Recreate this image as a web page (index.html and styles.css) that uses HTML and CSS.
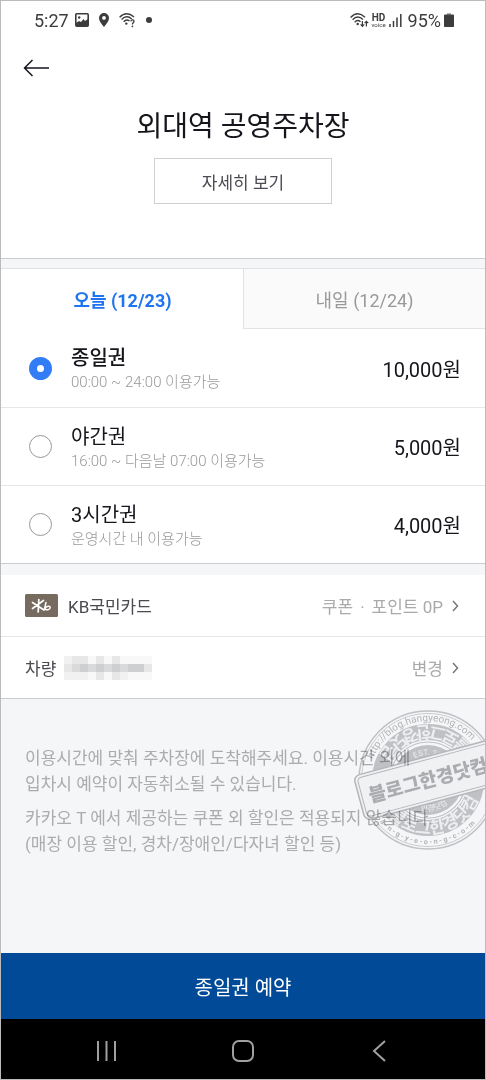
FILE: index.html
```html
<!DOCTYPE html>
<html lang="ko">
<head>
    <meta charset="UTF-8">
    <meta name="viewport" content="width=device-width, initial-scale=1.0">
    <title>외대역 공영주차장</title>
    <link rel="stylesheet" href="styles.css">
</head>
<body>
    <div class="screen">
        <div class="status-bar">
            <div class="status-left">
                <span class="status-time">5:27</span>
                <svg width="14" height="14" viewBox="0 0 14 14">
                    <rect x="0.8" y="0.8" width="12.4" height="12.4" rx="1" fill="none" stroke="#3c3c3c" stroke-width="1.6"/>
                    <path d="M1 10l3-2 2 1 2.500-3L10 8l3-2v7H1z" fill="#3c3c3c"/>
                    <circle cx="4.200" cy="4.500" r="1.200" fill="#3c3c3c"/>
                </svg>
                <svg class="icon-pin" width="10" height="14" viewBox="0 0 10 14">
                    <path fill-rule="evenodd" d="M5 0a5 5 0 0 0-5 5c0 3.500 5 9 5 9s5-5.500 5-9a5 5 0 0 0-5-5zm0 3a1.900 1.900 0 1 1 0 3.800A1.900 1.900 0 0 1 5 3z" fill="#3c3c3c"/>
                </svg>
                <svg class="icon-wifi" width="17" height="15" viewBox="0 0 17 15">
                    <g fill="none" stroke="#3c3c3c" stroke-width="1.300">
                        <path d="M0.600 4.200Q7.500-2.600 15 4"/>
                        <path d="M2.600 6.500Q7.500 1.300 12.800 6"/>
                        <path d="M4.600 8.700Q7.500 5.600 10.500 8"/>
                        <path d="M11.800 8.400q0.300-1.600 1.700-1.600 1.500 0 1.500 1.500 0 1-0.900 1.600-0.700 0.500-0.700 1.600"/>
                    </g>
                    <circle cx="7.300" cy="10.600" r="1.200" fill="#3c3c3c"/>
                    <circle cx="13.400" cy="13.300" r="0.900" fill="#3c3c3c"/>
                </svg>
                <span class="status-dot"></span>
            </div>
            <div class="status-right">
                <svg width="19" height="15" viewBox="0 0 19 15">
                    <g fill="none" stroke="#3c3c3c" stroke-width="1.400">
                        <path d="M0.600 4.400Q7.500-2.600 15 4.200"/>
                        <path d="M2.600 6.800Q7.500 1.500 13 6.500"/>
                        <path d="M4.700 9.200Q7.500 6.200 10.500 8.800"/>
                        <path d="M12.400 8v5.200M10.600 11.400l1.800 1.900 1.800-1.900M16.400 13.500V8.200M14.600 10.200l1.800-1.900 1.800 1.900" stroke-width="1.200"/>
                    </g>
                    <circle cx="7.700" cy="11" r="1.200" fill="#3c3c3c"/>
                </svg>
                <span class="hd-voice"><b>HD</b><span>voice</span></span>
                <svg width="13" height="14" viewBox="0 0 13 14">
                    <path d="M1 11v3M4.500 8v6M8 4.500V14M11.800 1v13" stroke="#3c3c3c" stroke-width="1.500"/>
                </svg>
                <span class="status-battery">95%</span>
                <svg width="10" height="14" viewBox="0 0 10 14">
                    <path d="M3 0h4v2H3z" fill="#aaa"/>
                    <rect y="1.500" width="10" height="12.500" rx="0.800" fill="#3c3c3c"/>
                </svg>
            </div>
        </div>

        <div class="header">
            <button type="button" class="btn-back" aria-label="뒤로">
                <svg width="26" height="18" viewBox="0 0 26 18">
                    <path d="M26 9H1.500M9.500 1L1.500 9l8 8" fill="none" stroke="#15151c" stroke-width="1.500"/>
                </svg>
            </button>
            <h1>외대역 공영주차장</h1>
            <button type="button" class="btn-detail">자세히 보기</button>
        </div>

        <div class="tabs">
            <button type="button" class="tab active">오늘 (12/23)</button>
            <button type="button" class="tab">내일 (12/24)</button>
        </div>

        <form class="ticket-list">
            <label class="ticket">
                <input type="radio" name="ticket" value="day" checked>
                <span class="ticket-info">
                    <span class="ticket-name selected">종일권</span>
                    <span class="ticket-time">00:00 ~ 24:00 이용가능</span>
                </span>
                <span class="ticket-price">10,000원</span>
            </label>
            <label class="ticket">
                <input type="radio" name="ticket" value="night">
                <span class="ticket-info">
                    <span class="ticket-name">야간권</span>
                    <span class="ticket-time">16:00 ~ 다음날 07:00 이용가능</span>
                </span>
                <span class="ticket-price">5,000원</span>
            </label>
            <label class="ticket">
                <input type="radio" name="ticket" value="3h">
                <span class="ticket-info">
                    <span class="ticket-name">3시간권</span>
                    <span class="ticket-time">운영시간 내 이용가능</span>
                </span>
                <span class="ticket-price">4,000원</span>
            </label>
        </form>

        <div class="options">
            <a href="#" class="option">
                <svg class="card-logo" width="33" height="23" viewBox="0 0 33 23">
                    <rect width="33" height="23" rx="1.500" fill="#776a5f"/>
                    <g fill="none" stroke="#fff" stroke-width="1.700" stroke-linecap="round">
                        <path d="M13.800 5.500L13.200 18M7.500 8.500L19 16M18.500 6.500L7.500 14.500"/>
                        <path d="M21 8.500l-1.400 6.200c1.500 2 5.600 1 5.600-1.200 0-2-3.600-1.600-5 0.600" stroke-width="1.500"/>
                    </g>
                </svg>
                <span class="option-name">KB국민카드</span>
                <span class="option-value"><span>쿠폰</span><span class="dot">·</span><span>포인트 0P</span></span>
                <svg class="chevron" width="7" height="12" viewBox="0 0 7 12">
                    <path d="M1 1l4.500 5L1 11" fill="none" stroke="#777" stroke-width="1.500"/>
                </svg>
            </a>
            <a href="#" class="option">
                <span class="option-name">차량</span>
                <!-- 차량번호 모자이크 -->
                <svg class="plate" width="88" height="24" viewBox="0 0 88 24" shape-rendering="crispEdges">
                    <rect width="88" height="24" fill="#f1f1f1"/>
                    <path d="M24 0h8v24h-8zM40 0h8v8h-8zM56 0h32v8H56zM40 16h8v8h-8zM64 16h24v8H64z" fill="#f8f8f8"/>
                    <path d="M8 0h16v8H8zM32 0h8v24h-8zM48 0h8v24h-8zM0 8h8v8H0zM80 8h8v8h-8z" fill="#e7e7e7"/>
                    <path d="M8 8h8v8H8zM24 8h8v8h-8zM40 8h8v8h-8zM56 8h8v8h-8z" fill="#dadada"/>
                    <path d="M16 8h8v8h-8zM32 8h8v8h-8zM48 8h8v8h-8zM64 8h16v8H64z" fill="#cdcfd0"/>
                </svg>
                <span class="option-value">변경</span>
                <svg class="chevron" width="7" height="12" viewBox="0 0 7 12">
                    <path d="M1 1l4.500 5L1 11" fill="none" stroke="#777" stroke-width="1.500"/>
                </svg>
            </a>
        </div>

        <div class="notice">
            <p>이용시간에 맞춰 주차장에 도착해주세요. 이용시간 외에<br>입차시 예약이 자동취소될 수 있습니다.</p>
            <p>카카오 T 에서 제공하는 쿠폰 외 할인은 적용되지 않습니다.<br>(매장 이용 할인, 경차/장애인/다자녀 할인 등)</p>

            <svg class="stamp" width="150" height="150" viewBox="-75 -75 150 150">
                <defs>
                    <path id="ringUrl" d="M-59 0A59 59 0 0 1 59 0"/>
                    <path id="ringDash" d="M-64 0A64 64 0 0 0 64 0"/>
                    <path id="ringTop" d="M54 0A54 54 0 0 0 -54 0"/>
                    <path id="ringBottom" d="M-54 0A54 54 0 0 0 54 0"/>
                    <path id="ringEst" d="M-25 0A25 25 0 0 1 25 0"/>
                    <path id="ringSmall" d="M-31 0A31 31 0 0 0 31 0"/>
                </defs>
                <g fill="none" stroke="#c8c8ca">
                    <circle r="69" stroke-width="1.500"/>
                    <circle r="66.500" stroke-width="0.800"/>
                    <circle r="48" stroke-width="16"/>
                    <circle r="38" stroke-width="1.200"/>
                </g>
                <circle r="35" fill="#c8c8ca"/>
                <g class="stamp-text" text-anchor="middle">
                    <text class="stamp-url"><textPath href="#ringUrl" startOffset="44%">http://blog.hangyeong.com</textPath></text>
                    <text class="stamp-dash"><textPath href="#ringDash" startOffset="47%">h - a - n - g - y - e - o - n - g - c - o - m</textPath></text>
                    <text class="stamp-ring"><textPath href="#ringTop" startOffset="53%">블로그한경닷컴</textPath></text>
                    <text class="stamp-ring"><textPath href="#ringBottom" startOffset="56%">블로그한경닷컴</textPath></text>
                    <text class="stamp-est"><textPath href="#ringEst" startOffset="55%">EST. 2009</textPath></text>
                    <text class="stamp-est"><textPath href="#ringSmall" startOffset="57%">한경닷컴</textPath></text>
                </g>
                <g transform="rotate(-15)">
                    <rect x="-71" y="-23" width="142" height="46" rx="6" fill="#fafafa" stroke="#bdbdbf" stroke-width="1.500"/>
                    <rect x="-68" y="-20" width="136" height="40" rx="4" fill="#fafafa" stroke="#bdbdbf"/>
                    <text class="stamp-title" y="7" text-anchor="middle">블로그한경닷컴</text>
                </g>
            </svg>
        </div>

        <button type="button" class="btn-reserve">종일권 예약</button>

        <div class="nav-bar">
            <button type="button" aria-label="최근 앱">
                <svg width="22" height="22" viewBox="0 0 22 22">
                    <path d="M2 1v20M10.500 1v20M19 1v20" stroke="#a0a0a0" stroke-width="2"/>
                </svg>
            </button>
            <button type="button" aria-label="홈">
                <svg width="24" height="24" viewBox="0 0 24 24">
                    <rect x="2" y="2" width="20" height="20" rx="6" fill="none" stroke="#a0a0a0" stroke-width="2"/>
                </svg>
            </button>
            <button type="button" aria-label="이전">
                <svg width="22" height="22" viewBox="0 0 22 22">
                    <path d="M17 1L6 11l11 10" fill="none" stroke="#a0a0a0" stroke-width="2"/>
                </svg>
            </button>
        </div>
    </div>
</body>
</html>
```
FILE: styles.css
```css
* {
    margin: 0;
    padding: 0;
    box-sizing: border-box;
}
body {
    font-family: Roboto, "Noto Sans CJK KR", sans-serif;
    font-weight: 300;
    color: #15151c;
    background: #fff;
}
button {
    font: inherit;
    color: inherit;
    border: none;
    background: none;
    cursor: pointer;
}
a {
    color: inherit;
    text-decoration: none;
}
svg {
    display: block;
    flex-shrink: 0;
}
.screen {
    display: flex;
    flex-direction: column;
    min-height: 100vh;
    border: 1px solid #bbb;
    background: #f4f6f8;
}

/* 상태바 */
.status-bar {
    display: flex;
    justify-content: space-between;
    align-items: center;
    height: 38px;
    padding: 0 31px 0 33px;
    background: #fff;
    color: #3c3c3c;
    font-size: 18px;
    font-weight: 400;
}
.status-left {
    display: flex;
    align-items: center;
}
.status-time {
    margin-right: 6px;
}
.icon-pin {
    margin-left: 10px;
}
.icon-wifi {
    margin-left: 10px;
}
.status-dot {
    width: 6px;
    height: 6px;
    margin-left: 10px;
    border-radius: 50%;
    background: #3c3c3c;
}
.status-right {
    display: flex;
    align-items: center;
    gap: 3px;
}
.hd-voice {
    display: flex;
    flex-direction: column;
    align-items: center;
    font-size: 6px;
    line-height: 5px;
}
.hd-voice b {
    font-size: 10px;
    line-height: 8px;
}
.status-battery {
    margin-left: 3px;
}

/* 주차장 정보 */
.header {
    display: flex;
    flex-direction: column;
    align-items: center;
    padding: 20px 22px 54px;
    background: #fff;
    border-bottom: 1px solid #ccc;
}
.btn-back {
    align-self: flex-start;
}
h1 {
    margin-top: 30px;
    font-size: 28px;
    font-weight: 400;
    line-height: 40px;
}
.btn-detail {
    width: 178px;
    height: 46px;
    margin-top: 11px;
    border: 1px solid #d0d0d0;
    font-size: 17px;
    font-weight: 400;
    color: #4c4c54;
}

/* 날짜 탭 */
.tabs {
    display: flex;
    margin-top: 9px;
    border-top: 1px solid #dfe2e4;
    background: #fff;
}
.tab {
    flex: 1;
    height: 60px;
    border-left: 1px solid #e2e2e2;
    border-bottom: 1px solid #e2e2e2;
    background: #fafafa;
    font-size: 18px;
    font-weight: 400;
    color: #999;
}
.tab.active {
    border-color: #fff;
    background: #fff;
    font-weight: 700;
    color: #1f74f0;
}

/* 주차권 */
.ticket-list {
    background: #fff;
    border-bottom: 1px solid #ccc;
}
.ticket {
    display: flex;
    align-items: center;
    height: 78px;
    padding: 0 24px 0 28px;
    cursor: pointer;
}
.ticket + .ticket {
    border-top: 1px solid #e6e6e6;
}
.ticket input {
    appearance: none;
    width: 23px;
    height: 23px;
    border: 1px solid #999;
    border-radius: 50%;
    background: #fff;
}
.ticket input:checked {
    border: 8px solid #327df5;
}
.ticket-info {
    flex: 1;
    margin-left: 19px;
    padding-top: 2px;
}
.ticket-name {
    display: block;
    font-size: 20px;
    font-weight: 400;
    line-height: 26px;
}
.ticket-name.selected {
    font-weight: 500;
}
.ticket-time {
    display: block;
    font-size: 15px;
    line-height: 22px;
    color: #999;
}
.ticket-price {
    font-size: 20px;
    font-weight: 400;
}

/* 결제수단, 차량 */
.options {
    margin-top: 11px;
    background: #fff;
    border-bottom: 1px solid #ccc;
}
.option {
    display: flex;
    align-items: center;
    height: 61px;
    padding: 0 26px 0 24px;
    font-size: 17px;
    font-weight: 400;
}
.option + .option {
    height: 62px;
    border-top: 1px solid #e6e6e6;
}
.card-logo {
    margin-right: 10px;
}
.option-name {
    color: #4a4a50;
}
.plate {
    margin-left: 8px;
}
.option-value {
    display: flex;
    align-items: baseline;
    margin-left: auto;
    color: #aaa;
}
.option-value .dot {
    padding: 0 7px;
}
.chevron {
    margin-left: 9px;
}

/* 안내 문구 */
.notice {
    position: relative;
    flex: 1;
    padding: 46px 24px 0;
    overflow: hidden;
    font-size: 17px;
    font-weight: 400;
    line-height: 26px;
    color: #aaacae;
}
.notice p {
    margin-bottom: 8px;
    white-space: nowrap;
}
.stamp {
    position: absolute;
    top: 6px;
    right: -18px;
    mix-blend-mode: multiply;
}
.stamp-text {
    fill: #bbb;
}
.stamp-url {
    font-size: 10px;
    font-weight: 400;
}
.stamp-dash {
    font-size: 7px;
    font-weight: 700;
}
.stamp-ring {
    font-size: 17px;
    font-weight: 700;
    fill: #f7f7f7;
}
.stamp-est {
    font-size: 8px;
    fill: #f7f7f7;
}
.stamp-title {
    font-size: 19px;
    font-weight: 900;
    fill: #b2b2b4;
}

/* 하단 */
.btn-reserve {
    height: 66px;
    background: #004a98;
    color: #fff;
    font-size: 20px;
    font-weight: 400;
}
.nav-bar {
    display: flex;
    justify-content: space-between;
    align-items: center;
    height: 60px;
    padding: 4px 95px 0;
    background: #000;
}
```
